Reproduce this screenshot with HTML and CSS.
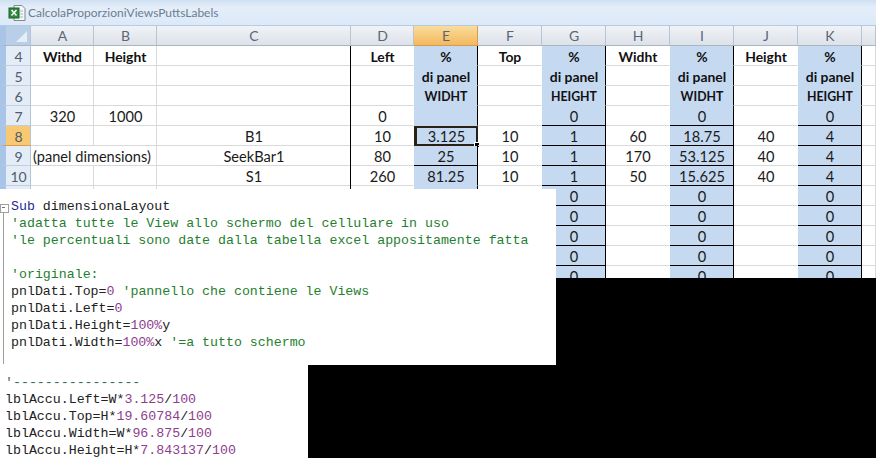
FILE: index.html
```html
<!DOCTYPE html>
<html lang="it">
<head>
<meta charset="utf-8">
<title>CalcolaProporzioniViewsPuttsLabels</title>
<link rel="stylesheet" href="styles.css">
</head>
<body>
<div class="window">
  <div class="titlebar">
    <svg class="xl-icon" width="18" height="18" viewBox="0 0 18 18">
      <path d="M6 1.500h8l3 3v12H6z" fill="#f4f6f8" stroke="#7d8a94"/>
      <path d="M12 7h3M12 10h3M12 13h3" stroke="#a9b6bf"/>
      <rect x="1" y="4" width="10" height="10" fill="#2f8a3a" stroke="#1c5f27"/>
      <path d="M3.500 6l5 5.500M8.500 6l-5 5.500" stroke="#fff" stroke-width="1.500"/>
    </svg>
    <span class="title">CalcolaProporzioniViewsPuttsLabels</span>
  </div>
  <div class="sheet">
    <div class="hd corner"><span class="tri"></span></div>
    <div class="hd">A</div><div class="hd">B</div><div class="hd">C</div><div class="hd">D</div>
    <div class="hd on">E</div><div class="hd">F</div><div class="hd">G</div><div class="hd">H</div>
    <div class="hd">I</div><div class="hd">J</div><div class="hd">K</div><div class="hd"></div>

    <div class="rh">4</div><div class="c b">Withd</div><div class="c b">Height</div><div class="c"></div><div class="c b vl">Left</div><div class="c b blue vr">%</div><div class="c b">Top</div><div class="c b blue vr">%</div><div class="c b">Widht</div><div class="c b blue vr">%</div><div class="c b">Height</div><div class="c b blue vr">%</div><div class="c"></div>

    <div class="rh">5</div><div class="c"></div><div class="c"></div><div class="c"></div><div class="c vl"></div><div class="c b blue vr">di panel</div><div class="c"></div><div class="c b blue vr">di panel</div><div class="c"></div><div class="c b blue vr">di panel</div><div class="c"></div><div class="c b blue vr">di panel</div><div class="c"></div>

    <div class="rh">6</div><div class="c"></div><div class="c"></div><div class="c"></div><div class="c vl"></div><div class="c b caps blue vr">WIDHT</div><div class="c"></div><div class="c b caps blue vr">HEIGHT</div><div class="c"></div><div class="c b caps blue vr">WIDHT</div><div class="c"></div><div class="c b caps blue vr">HEIGHT</div><div class="c"></div>

    <div class="rh">7</div><div class="c">320</div><div class="c">1000</div><div class="c"></div><div class="c vl">0</div><div class="c blue vr"></div><div class="c"></div><div class="c blue vr">0</div><div class="c"></div><div class="c blue vr">0</div><div class="c"></div><div class="c blue vr">0</div><div class="c"></div>

    <div class="rh on">8</div><div class="c"></div><div class="c"></div><div class="c">B1</div><div class="c vl">10</div><div class="c blue vr sel">3.125<span class="handle"></span></div><div class="c">10</div><div class="c blue vr hl">1</div><div class="c">60</div><div class="c blue vr hl">18.75</div><div class="c">40</div><div class="c blue vr hl">4</div><div class="c"></div>

    <div class="rh">9</div><div class="c wide">(panel dimensions)</div><div class="c">SeekBar1</div><div class="c vl">80</div><div class="c blue vr hb">25</div><div class="c">10</div><div class="c blue vr hl">1</div><div class="c">170</div><div class="c blue vr hl">53.125</div><div class="c">40</div><div class="c blue vr hl">4</div><div class="c"></div>

    <div class="rh">10</div><div class="c"></div><div class="c"></div><div class="c">S1</div><div class="c vl">260</div><div class="c blue vr">81.25</div><div class="c">10</div><div class="c blue vr hl">1</div><div class="c">50</div><div class="c blue vr hl">15.625</div><div class="c">40</div><div class="c blue vr hl">4</div><div class="c"></div>

    <div class="rh">11</div><div class="c"></div><div class="c"></div><div class="c"></div><div class="c vl"></div><div class="c blue vr"></div><div class="c"></div><div class="c blue vr hl">0</div><div class="c"></div><div class="c blue vr hl">0</div><div class="c"></div><div class="c blue vr hl">0</div><div class="c"></div>

    <div class="rh">12</div><div class="c"></div><div class="c"></div><div class="c"></div><div class="c vl"></div><div class="c blue vr"></div><div class="c"></div><div class="c blue vr hl">0</div><div class="c"></div><div class="c blue vr hl">0</div><div class="c"></div><div class="c blue vr hl">0</div><div class="c"></div>

    <div class="rh">13</div><div class="c"></div><div class="c"></div><div class="c"></div><div class="c vl"></div><div class="c blue vr"></div><div class="c"></div><div class="c blue vr hl">0</div><div class="c"></div><div class="c blue vr hl">0</div><div class="c"></div><div class="c blue vr hl">0</div><div class="c"></div>

    <div class="rh">14</div><div class="c"></div><div class="c"></div><div class="c"></div><div class="c vl"></div><div class="c blue vr"></div><div class="c"></div><div class="c blue vr hl">0</div><div class="c"></div><div class="c blue vr hl">0</div><div class="c"></div><div class="c blue vr hl">0</div><div class="c"></div>

    <div class="rh">15</div><div class="c"></div><div class="c"></div><div class="c"></div><div class="c vl"></div><div class="c blue vr"></div><div class="c"></div><div class="c blue vr hl">0</div><div class="c"></div><div class="c blue vr hl">0</div><div class="c"></div><div class="c blue vr hl">0</div><div class="c"></div>
  </div>

  <div class="code code-main">
    <span class="fold"></span>
<pre><span class="kw">Sub</span> dimensionaLayout
<span class="cm">'adatta tutte le View allo schermo del cellulare in uso</span>
<span class="cm">'le percentuali sono date dalla tabella excel appositamente fatta</span>

<span class="cm">'originale:</span>
pnlDati.Top=<span class="num">0</span> <span class="cm">'pannello che contiene le Views</span>
pnlDati.Left=<span class="num">0</span>
pnlDati.Height=<span class="num">100%</span>y
pnlDati.Width=<span class="num">100%</span>x <span class="cm">'=a tutto schermo</span></pre>
  </div>

  <div class="code code-second">
<pre><span class="dash">'----------------</span>
lblAccu.Left=W*<span class="num">3.125</span>/<span class="num">100</span>
lblAccu.Top=H*<span class="num">19.60784</span>/<span class="num">100</span>
lblAccu.Width=W*<span class="num">96.875</span>/<span class="num">100</span>
lblAccu.Height=H*<span class="num">7.843137</span>/<span class="num">100</span></pre>
  </div>
</div>
</body>
</html>
```
FILE: styles.css
```css
* { box-sizing: border-box; }
html, body { margin: 0; padding: 0; background: #000; }
.window {
  position: relative;
  width: 876px;
  height: 458px;
  overflow: hidden;
  background: #000;
}
.titlebar {
  height: 26px;
  display: flex;
  align-items: center;
  gap: 2px;
  padding-left: 8px;
  background: linear-gradient(#cfe0f1, #e4eefa 30%, #dce9f8);
  border-bottom: 1px solid #b4cbe3;
}
.xl-icon { flex: none; }
.title {
  font: 12px "Lato", "Liberation Sans", sans-serif;
  color: #6d7d8e;
}
.sheet {
  display: grid;
  grid-template-columns: 31px 63px 63px 194px 63px 64px 64px 64px 64px 64px 64px 64px 1fr;
  grid-auto-rows: 20px;
  grid-template-rows: 20px;
  height: 252px;
  overflow: hidden;
  background: #fff;
  font: 14.600px "Lato", "Liberation Sans", sans-serif;
  color: #1a1a1a;
}
.hd {
  display: flex;
  align-items: center;
  justify-content: center;
  padding-left: 1px;
  background: linear-gradient(#f0f3f7, #dde2e9);
  border-right: 1px solid #b9c4d1;
  border-bottom: 1px solid #a9b6c5;
  color: #5a6675;
  font-size: 14px;
}
.hd.on { background: linear-gradient(#f9dc9b, #f4b85f); border-color: #d99d4a; }
.corner {
  justify-content: flex-end;
  align-items: flex-end;
  padding: 0 3px 3px 0;
  background: #b9cfe8;
  border-left: 6px solid #a8c4e6;
}
.tri {
  width: 0;
  height: 0;
  border-left: 11px solid transparent;
  border-bottom: 11px solid #e6edf5;
}
.rh {
  display: flex;
  align-items: center;
  justify-content: center;
  padding: 2px 0 0 1px;
  background: #e3ecf7;
  border-left: 6px solid #a8c4e6;
  border-right: 1px solid #b5c5d8;
  border-bottom: 1px solid #c0cedd;
  color: #4f5d6c;
  font-size: 14px;
}
.rh.on { background: #f8c873; border-bottom-color: #d99d4a; }
.c {
  position: relative;
  display: flex;
  align-items: center;
  justify-content: center;
  padding: 2px 0 0 1px;
  border-right: 1px solid #d9d9d9;
  border-bottom: 1px solid #d9d9d9;
  white-space: nowrap;
}
.c:has(+ .blue) { border-right-color: transparent; }
.wide { grid-column: span 2; justify-content: flex-start; padding-left: 2px; }
.b { font-weight: 700; font-size: 13.900px; color: #111; }
.caps { font-size: 12.300px; }
.blue { background: #c5d9f1; border-right-color: #c5d9f1; border-bottom-color: #c5d9f1; }
.vl { box-shadow: -1px 0 0 #000; }
.vr { border-right: 1px solid #000; }
.hb { border-bottom: 1px solid #000; }
.hl { border-bottom: 1px solid #000; box-shadow: 0 -1px 0 #000; }
.sel { border: 2px solid #2a2014; border-left-width: 3px; padding: 0; }
.handle {
  position: absolute;
  right: -4px;
  bottom: -4px;
  width: 6px;
  height: 6px;
  background: #000;
  border: 1px solid #fff;
}
.code {
  position: absolute;
  left: 0;
  background: #fff;
}
.code pre {
  margin: 0;
  font: 13.280px/17px "Liberation Mono", "Courier New", monospace;
  color: #222;
}
.code-main {
  top: 189px;
  width: 556px;
  height: 176px;
  padding: 9px 0 0 11px;
}
.code-second {
  top: 365px;
  width: 308px;
  height: 93px;
  padding: 9px 0 0 5px;
}
.fold {
  position: absolute;
  left: 3px;
  top: 15px;
  bottom: 1px;
  width: 1px;
  background: #a0a0a0;
}
.fold::before {
  content: "";
  position: absolute;
  left: -3px;
  top: 0;
  width: 7px;
  height: 7px;
  background: #fff;
  border: 1px solid #a0a0a0;
}
.fold::after {
  content: "";
  position: absolute;
  left: -1px;
  top: 3px;
  width: 3px;
  height: 1px;
  background: #707070;
}
.kw { color: #1c2c96; }
.cm { color: #1f8030; }
.dash { color: #3a6a4a; }
.num { color: #8e3d8e; }
```
